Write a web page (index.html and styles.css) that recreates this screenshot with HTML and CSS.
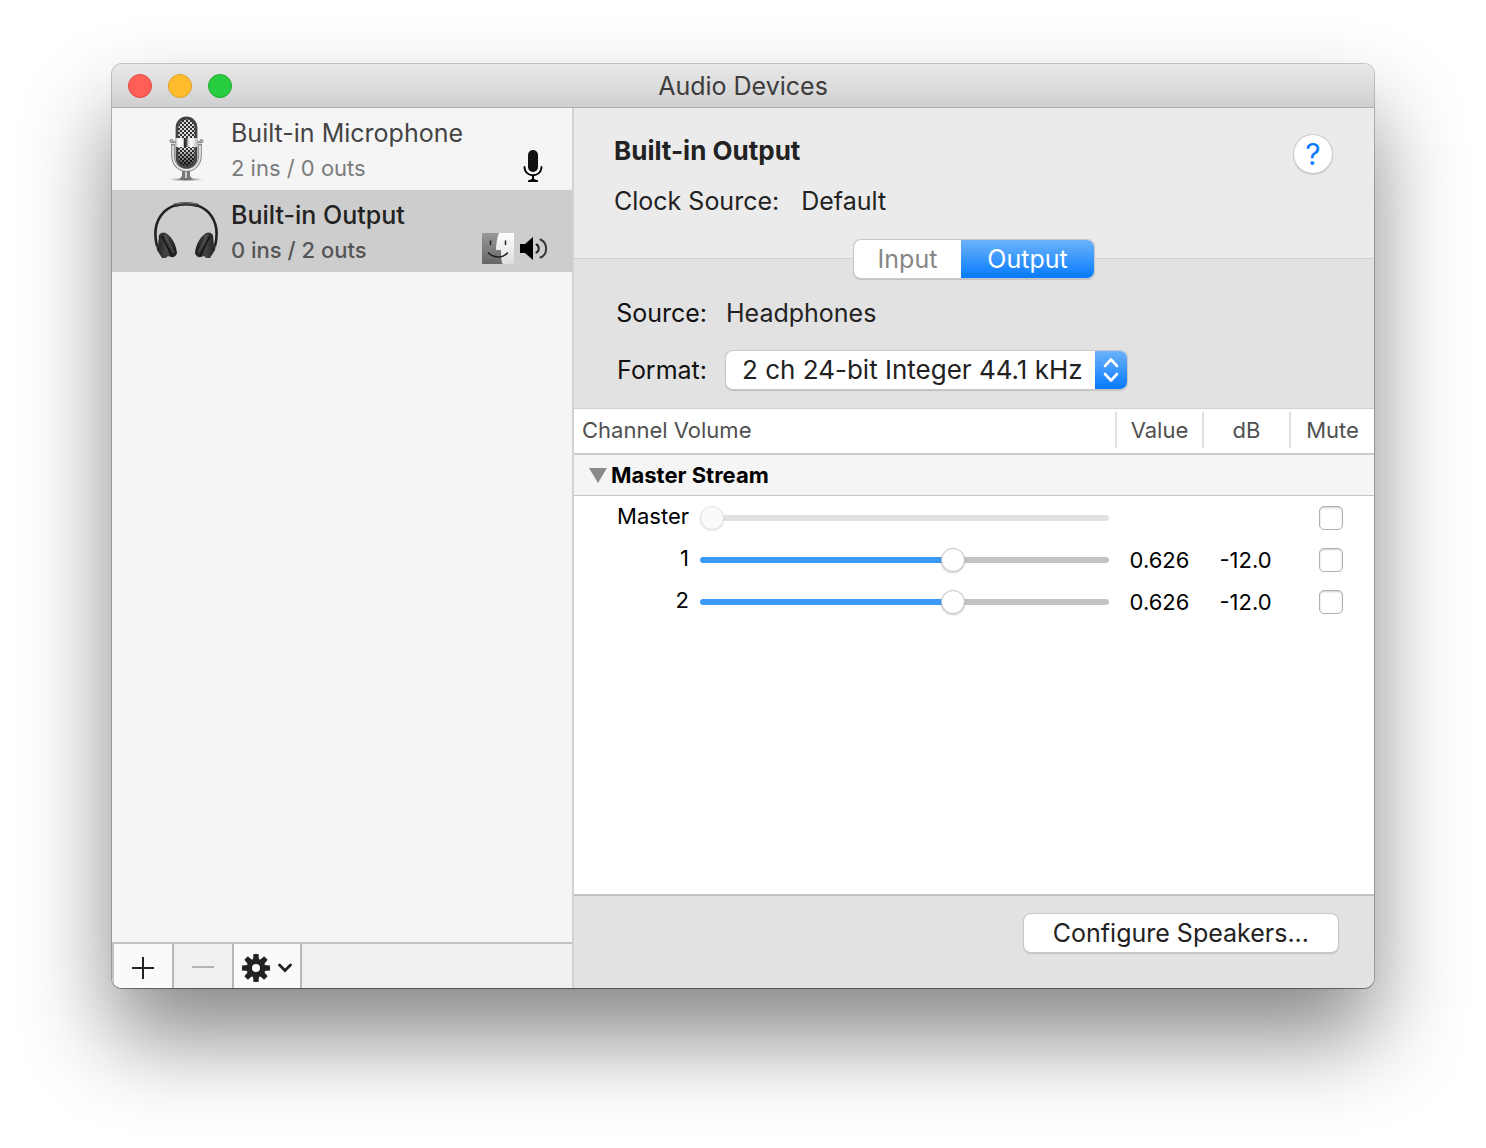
FILE: index.html
```html
<!DOCTYPE html>
<html lang="en">
<head>
    <meta charset="UTF-8">
    <meta name="viewport" content="width=device-width, initial-scale=1.0">
    <title>Audio Devices</title>
    <link rel="stylesheet" href="styles.css">
</head>
<body>
    <div class="window">
        <header class="titlebar">
            <div class="lights">
                <button class="light close" aria-label="Close"></button>
                <button class="light minimize" aria-label="Minimize"></button>
                <button class="light zoom" aria-label="Zoom"></button>
            </div>
            <h1>Audio Devices</h1>
        </header>

        <div class="content">
            <aside class="sidebar">
                <ul class="devices">
                    <li class="device">
                        <svg class="device-icon" viewBox="0 0 68 68" aria-hidden="true">
                            <defs>
                                <pattern id="mesh" width="4" height="4" patternUnits="userSpaceOnUse">
                                    <rect width="4" height="4" fill="#333"/>
                                    <rect width="2" height="2" fill="#e8e8e8"/>
                                    <rect x="2" y="2" width="2" height="2" fill="#e8e8e8"/>
                                </pattern>
                                <linearGradient id="chrome">
                                    <stop offset="0" stop-color="#aaa"/>
                                    <stop offset=".15" stop-color="#fff"/>
                                    <stop offset=".36" stop-color="#eee"/>
                                    <stop offset=".4" stop-color="#222"/>
                                    <stop offset=".52" stop-color="#555"/>
                                    <stop offset=".56" stop-color="#ccc"/>
                                    <stop offset=".7" stop-color="#fff"/>
                                    <stop offset="1" stop-color="#bbb"/>
                                </linearGradient>
                                <linearGradient id="shade" x2="0" y2="1">
                                    <stop offset="0" stop-color="#000" stop-opacity=".1"/>
                                    <stop offset=".6" stop-color="#000" stop-opacity="0"/>
                                    <stop offset="1" stop-color="#000" stop-opacity=".8"/>
                                </linearGradient>
                                <radialGradient id="base">
                                    <stop offset="0" stop-color="#444"/>
                                    <stop offset="1" stop-color="#999" stop-opacity="0"/>
                                </radialGradient>
                            </defs>
                            <ellipse cx="34" cy="63.500" rx="18" ry="2" fill="url(#base)"/>
                            <path d="M30 53h8v7l3 3.500H27l3-3.500z" fill="#777"/>
                            <path d="M33 54h2v8h-2z" fill="#ccc"/>
                            <path d="M21 28v11c0 20 27 20 27 0V28" fill="none" stroke="#777" stroke-width="3.500"/>
                            <path d="M21 28v11c0 20 27 20 27 0V28" fill="none" stroke="#e4e4e4" stroke-width="1.800"/>
                            <rect x="25" y="2" width="19" height="49" rx="9.500" fill="url(#mesh)"/>
                            <rect x="25" y="2" width="19" height="49" rx="9.500" fill="url(#shade)" stroke="#444" stroke-width="2.800"/>
                            <rect x="23" y="22" width="23" height="9" fill="url(#chrome)"/>
                            <path d="M19 26h5M45 26h5M19 28.500h4M46 28.500h4" stroke="#888" stroke-width="1.500"/>
                            <circle cx="19.500" cy="25" r="1.500" fill="#ccc" stroke="#777"/>
                            <circle cx="49.500" cy="25" r="1.500" fill="#ccc" stroke="#777"/>
                        </svg>
                        <div class="device-info">
                            <div class="device-name">Built-in Microphone</div>
                            <div class="device-io">2 ins / 0 outs</div>
                        </div>
                        <div class="device-status">
                            <svg width="30" height="32" viewBox="0 0 30 32" role="img" aria-label="Default input">
                                <rect x="10" y="0" width="10" height="22" rx="5" fill="#111"/>
                                <path d="M6.500 17c0 11 17 11 17 0" fill="none" stroke="#000" stroke-width="1.800" stroke-linecap="round"/>
                                <path d="M14 25h2v4l4 1.500V32H10v-1.500l4-1.500z"/>
                            </svg>
                        </div>
                    </li>
                    <li class="device selected">
                        <svg class="device-icon" viewBox="0 0 68 68" aria-hidden="true">
                            <defs>
                                <linearGradient id="cup">
                                    <stop offset="0" stop-color="#1a1a1a"/>
                                    <stop offset=".5" stop-color="#444"/>
                                    <stop offset="1" stop-color="#181818"/>
                                </linearGradient>
                            </defs>
                            <path d="M5 48C-1 24 11 6 34 6s35 18 29 42" fill="none" stroke="#202020" stroke-width="2.600"/>
                            <path d="M22 7.500Q34 4 46 7.500" fill="none" stroke="#333" stroke-width="3.500"/>
                            <path d="M23 6Q34 3.500 45 6" fill="none" stroke="#777" stroke-width="1"/>
                            <path d="M3 40l3 9 1-12c2-3 5-3 7-2 7 5 10 12 11 20-1 3-3 5-6 4l-3-1-2 2h-4L5 52z" fill="url(#cup)"/>
                            <path d="M65 40l-3 9-1-12c-2-3-5-3-7-2-7 5-10 12-11 20 1 3 3 5 6 4l3-1 2 2h4l5-8z" fill="url(#cup)"/>
                            <path d="M10 38l10 20M58 38l-10 20" stroke="#0c0c0c" stroke-width="1.300"/>
                            <path d="M13 37l9 18M55 37l-9 18" stroke="#666" stroke-width=".8"/>
                        </svg>
                        <div class="device-info">
                            <div class="device-name">Built-in Output</div>
                            <div class="device-io">0 ins / 2 outs</div>
                        </div>
                        <div class="device-status">
                            <svg width="32" height="32" viewBox="0 0 32 32" role="img" aria-label="System sounds">
                                <defs>
                                    <linearGradient id="face-dark" x2="0" y2="1">
                                        <stop offset="0" stop-color="#999"/>
                                        <stop offset="1" stop-color="#666"/>
                                    </linearGradient>
                                    <linearGradient id="face-light" x2="0" y2="1">
                                        <stop offset="0" stop-color="#fff"/>
                                        <stop offset="1" stop-color="#ddd"/>
                                    </linearGradient>
                                </defs>
                                <rect y="1" width="32" height="31" fill="url(#face-dark)"/>
                                <path d="M17 1c-2 5-3 11-3 17h5c0 5 0 10 1.500 14H32V1z" fill="url(#face-light)"/>
                                <path d="M8.500 9v3.500M23.500 9v3.500" stroke="#222" stroke-width="1.500" stroke-linecap="round"/>
                                <path d="M6.500 21c5 5 14 5.500 19 0" fill="none" stroke="#222" stroke-width="1.500" stroke-linecap="round"/>
                            </svg>
                            <svg width="30" height="32" viewBox="0 0 30 32" role="img" aria-label="Default output">
                                <path d="M2 12h5l8-7v23l-8-7H2z"/>
                                <path d="M18.500 12.500c3 1.500 3 6.500 0 8" fill="none" stroke="#222" stroke-width="2" stroke-linecap="round"/>
                                <path d="M22.500 7.500c7.500 3.500 7.500 15 0 18" fill="none" stroke="#333" stroke-width="2" stroke-linecap="round"/>
                            </svg>
                        </div>
                    </li>
                </ul>
                <div class="toolbar">
                    <button class="tool" aria-label="Add device">
                        <svg width="22" height="22" viewBox="0 0 22 22"><path d="M0 11h22M11 0v22" stroke="#222" stroke-width="2"/></svg>
                    </button>
                    <button class="tool" aria-label="Remove device" disabled>
                        <svg width="22" height="22" viewBox="0 0 22 22"><path d="M0 10h22" stroke="#b4b4b4" stroke-width="2"/></svg>
                    </button>
                    <button class="tool actions" aria-label="Actions">
                        <svg width="28" height="28" viewBox="-14 -14 28 28">
                            <g fill="#222">
                                <path id="tooth" d="M-3-8-2.500-14h5L3-8V8L2.500 14h-5L-3 8z"/>
                                <use href="#tooth" transform="rotate(45)"/>
                                <use href="#tooth" transform="rotate(90)"/>
                                <use href="#tooth" transform="rotate(135)"/>
                                <circle r="9.500"/>
                            </g>
                            <circle r="4" fill="#fafafa"/>
                        </svg>
                        <svg width="14" height="10" viewBox="0 0 14 10"><path d="M1.500 2 7 7.500 12.500 2" fill="none" stroke="#222" stroke-width="2.800" stroke-linecap="round"/></svg>
                    </button>
                </div>
            </aside>

            <main class="detail">
                <section class="summary">
                    <div class="summary-text">
                        <h2>Built-in Output</h2>
                        <div class="clock"><span>Clock Source:</span><span>Default</span></div>
                    </div>
                    <button class="help" aria-label="Help">?</button>
                </section>

                <section class="settings">
                    <div class="segmented">
                        <button disabled>Input</button>
                        <button class="active">Output</button>
                    </div>
                    <div class="form">
                        <span class="form-label">Source:</span>
                        <span class="form-value">Headphones</span>
                        <label class="form-label" for="format">Format:</label>
                        <div class="popup">
                            <select id="format">
                                <option>2 ch 24-bit Integer 44.1 kHz</option>
                            </select>
                            <span class="popup-arrows">
                                <svg width="16" height="26" viewBox="0 0 16 26"><path d="M2 9l6-6.500L14 9M2 17l6 6.500 6-6.500" fill="none" stroke="#fff" stroke-width="2.600" stroke-linecap="round" stroke-linejoin="round"/></svg>
                            </span>
                        </div>
                    </div>
                </section>

                <section class="channels">
                    <table>
                        <colgroup>
                            <col class="col-name">
                            <col>
                            <col class="col-num">
                            <col class="col-num">
                            <col class="col-mute">
                        </colgroup>
                        <thead>
                            <tr>
                                <th colspan="2" class="volume">Channel Volume</th>
                                <th><span>Value</span></th>
                                <th><span>dB</span></th>
                                <th><span>Mute</span></th>
                            </tr>
                        </thead>
                        <tbody>
                            <tr class="group">
                                <td colspan="5">
                                    <button class="group-toggle" aria-expanded="true">
                                        <svg width="18" height="15" viewBox="0 0 18 15"><path d="M0 0h18L9 15z" fill="#8a8a8a"/></svg>
                                        Master Stream
                                    </button>
                                </td>
                            </tr>
                            <tr class="channel">
                                <td class="name"><label for="vol-master">Master</label></td>
                                <td><input type="range" id="vol-master" min="0" max="1" step="0.001" value="0" disabled></td>
                                <td></td>
                                <td></td>
                                <td class="mute"><input type="checkbox" aria-label="Mute master"></td>
                            </tr>
                            <tr class="channel">
                                <td class="name"><label for="vol-1">1</label></td>
                                <td><input type="range" id="vol-1" min="0" max="1" step="0.001" value="0.626" style="--level: 62%"></td>
                                <td class="value">0.626</td>
                                <td>-12.0</td>
                                <td class="mute"><input type="checkbox" aria-label="Mute channel 1"></td>
                            </tr>
                            <tr class="channel">
                                <td class="name"><label for="vol-2">2</label></td>
                                <td><input type="range" id="vol-2" min="0" max="1" step="0.001" value="0.626" style="--level: 62%"></td>
                                <td class="value">0.626</td>
                                <td>-12.0</td>
                                <td class="mute"><input type="checkbox" aria-label="Mute channel 2"></td>
                            </tr>
                        </tbody>
                    </table>
                </section>

                <footer class="footer">
                    <button class="push">Configure Speakers...</button>
                </footer>
            </main>
        </div>
    </div>
</body>
</html>
```

FILE: styles.css
```css
* {
    box-sizing: border-box;
}
body {
    margin: 0;
    min-height: 100vh;
    padding: 64px 112px 160px;
    display: flex;
    background-color: #fff;
    font-family: Inter, "Liberation Sans", sans-serif;
    font-size: 25px;
    line-height: 34px;
    color: #222;
}
button, select, input {
    font: inherit;
    color: inherit;
    margin: 0;
}
button {
    padding: 0;
    border: none;
    background: none;
}
.window {
    flex: 1;
    display: flex;
    flex-direction: column;
    border-radius: 10px;
    overflow: hidden;
    box-shadow: 0 0 0 1px rgba(0, 0, 0, 0.2), 0 1px 1px rgba(0, 0, 0, 0.3), 0 50px 90px rgba(0, 0, 0, 0.47);
}

/* title bar */
.titlebar {
    display: grid;
    grid-template-columns: 1fr auto 1fr;
    align-items: center;
    height: 44px;
    padding: 0 16px;
    background: linear-gradient(#e8e8e8, #d0d0d0);
    border-bottom: 1px solid #adadad;
}
.titlebar h1 {
    margin: 0;
    font-size: 25px;
    font-weight: 400;
    color: #3c3c3c;
}
.lights {
    display: flex;
    gap: 16px;
}
.light {
    width: 24px;
    height: 24px;
    border-radius: 50%;
    border: 1px solid;
}
.close {
    background-color: #ff5f57;
    border-color: #e2463f;
}
.minimize {
    background-color: #ffbd2e;
    border-color: #dfa023;
}
.zoom {
    background-color: #28cc41;
    border-color: #1dad2b;
}
.content {
    flex: 1;
    display: grid;
    grid-template-columns: 462px 1fr;
}

/* device list */
.sidebar {
    display: flex;
    flex-direction: column;
    background-color: #f5f5f5;
    border-right: 2px solid #d2d2d2;
}
.devices {
    flex: 1;
    margin: 0;
    padding: 0;
    list-style: none;
}
.device {
    display: flex;
    height: 82px;
    padding: 8px 24px 8px 40px;
    color: #444;
}
.device-icon {
    width: 68px;
    height: 68px;
    margin-right: 11px;
}
.device-info {
    flex: 1;
}
.device-io {
    font-size: 22px;
    line-height: 36px;
    color: #7c7c7c;
}
.selected {
    background-color: #cdcdcd;
    color: #222;
    font-weight: 500;
}
.selected .device-io {
    color: #555;
}
.device-status {
    display: flex;
    align-items: flex-end;
    gap: 4px;
}
.toolbar {
    display: flex;
    height: 46px;
    border-top: 2px solid #c2c2c2;
    border-left: 2px solid #c2c2c2;
    background-color: #f0f0f0;
}
.tool {
    display: flex;
    align-items: center;
    justify-content: center;
    gap: 8px;
    width: 60px;
    padding-top: 3px;
    border-right: 2px solid #b8b8b8;
    background-color: #fafafa;
}
.tool:disabled {
    background-color: #f0f0f0;
}
.actions {
    width: 68px;
}

/* selected device */
.detail {
    display: flex;
    flex-direction: column;
    background-color: #e2e2e2;
}
.summary {
    display: flex;
    justify-content: space-between;
    padding: 26px 42px 40px 40px;
    background-color: #ebebeb;
    border-bottom: 1px solid #d2d2d2;
}
.summary h2 {
    margin: 0 0 16px;
    font-size: 26px;
    font-weight: 700;
}
.clock {
    display: flex;
    gap: 22px;
}
.help {
    width: 38px;
    height: 38px;
    margin-top: 1px;
    border-radius: 50%;
    background-color: #fff;
    box-shadow: 0 0 0 1px #ccc, 0 1px 2px rgba(0, 0, 0, 0.4);
    color: #0a7aff;
    font-size: 30px;
}
.settings {
    border-bottom: 1px solid #d2d2d2;
    padding-bottom: 19px;
}
.segmented {
    display: flex;
    width: 240px;
    height: 38px;
    margin: -19px auto 18px;
    border-radius: 7px;
    background-color: #fff;
    box-shadow: 0 0 0 1px #c8c8c8, 0 1px 1px 1px rgba(0, 0, 0, 0.15);
    overflow: hidden;
}
.segmented button {
    width: 107px;
    color: #868686;
}
.segmented .active {
    flex: 1;
    background: linear-gradient(#6cb3fa, #067aff);
    color: #fff;
}
.form {
    display: grid;
    grid-template-columns: 133px 1fr;
    gap: 21px 19px;
    align-items: center;
}
.form-label {
    text-align: right;
    color: #111;
}
.popup {
    position: relative;
    width: 401px;
}
.popup select {
    display: block;
    width: 100%;
    height: 38px;
    padding: 0 40px 0 16px;
    appearance: none;
    border: none;
    border-radius: 7px;
    background-color: #fff;
    box-shadow: 0 0 0 1px #c8c8c8, 0 1px 1px 1px rgba(0, 0, 0, 0.15);
    font-size: 26px;
}
.popup-arrows {
    position: absolute;
    top: 0;
    right: 0;
    display: flex;
    align-items: center;
    justify-content: center;
    width: 32px;
    height: 38px;
    border-radius: 0 7px 7px 0;
    background: linear-gradient(#6cb3fa, #067aff);
    pointer-events: none;
}

/* channel table */
.channels {
    flex: 1;
    background-color: #fff;
    font-size: 22px;
    line-height: 30px;
    color: #000;
}
.channels table {
    width: 100%;
    table-layout: fixed;
    border-collapse: separate;
    border-spacing: 0;
}
.col-name {
    width: 126px;
}
.col-num {
    width: 87px;
}
.col-mute {
    width: 85px;
}
.channels th, .channels td {
    padding: 0;
    text-align: center;
}
.channels th {
    height: 46px;
    padding-bottom: 2px;
    border-bottom: 2px solid #cdcdcd;
    font-weight: 400;
    color: #505050;
}
.channels th span {
    display: block;
    line-height: 36px;
    border-left: 2px solid #e0e0e0;
}
.channels .volume {
    padding-left: 8px;
    text-align: left;
}
.group td {
    height: 41px;
    background-color: #f5f5f5;
    border-bottom: 1px solid #c8c8c8;
}
.group-toggle {
    display: flex;
    align-items: center;
    gap: 4px;
    padding-left: 15px;
    font-weight: 700;
}
.channel td {
    height: 42px;
    padding-top: 2px;
}
.channel .name {
    padding: 0 11px 2px 0;
    text-align: right;
}
.channel .value {
    padding-left: 2px;
}
.channel .mute {
    padding-right: 2px;
}
.channel input {
    display: block;
    appearance: none;
}
.channel input[type="range"] {
    width: calc(100% - 6px);
    height: 24px;
    background: none;
}
.channel input[type="range"]::-webkit-slider-runnable-track {
    height: 6px;
    border-radius: 3px;
    background: linear-gradient(to right, #3b99fc var(--level, 0%), #c3c3c3 var(--level, 0%));
}
.channel input[type="range"]::-webkit-slider-thumb {
    appearance: none;
    width: 24px;
    height: 24px;
    margin-top: -9px;
    border: 1px solid #c4c4c4;
    border-radius: 50%;
    background-color: #fff;
    box-shadow: 0 1px 2px rgba(0, 0, 0, 0.2);
}
.channel input[type="range"]:disabled::-webkit-slider-runnable-track {
    background: #e1e1e1;
}
.channel input[type="range"]:disabled::-webkit-slider-thumb {
    background-color: #fafafa;
    border-color: #e1e1e1;
    box-shadow: 0 1px 2px rgba(0, 0, 0, 0.1);
}
.channel input[type="checkbox"] {
    width: 24px;
    height: 24px;
    margin: 0 auto;
    border: 1px solid #b0b0b0;
    border-radius: 5px;
    background-color: #fff;
    box-shadow: inset 0 1px 2px rgba(0, 0, 0, 0.2);
}

/* footer */
.footer {
    display: flex;
    justify-content: flex-end;
    padding: 18px 36px 36px;
    border-top: 2px solid #c2c2c2;
}
.push {
    height: 38px;
    padding: 0 29px;
    border-radius: 7px;
    background-color: #fff;
    box-shadow: 0 0 0 1px #c8c8c8, 0 1px 1px 1px rgba(0, 0, 0, 0.15);
}
```
